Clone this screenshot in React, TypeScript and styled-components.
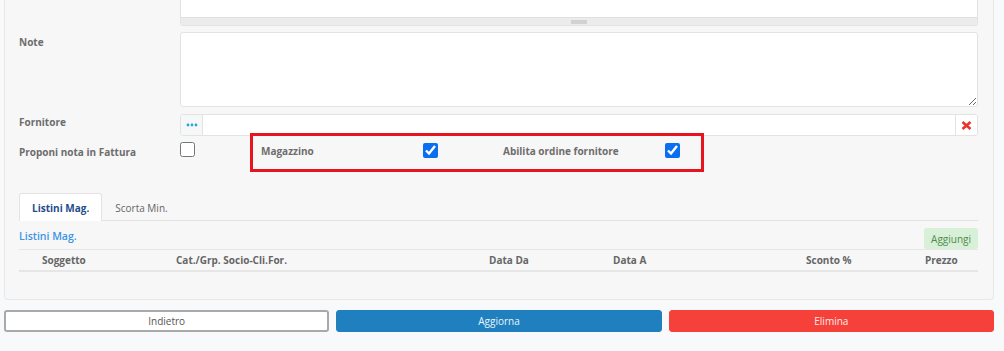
import styled, { createGlobalStyle } from "styled-components";

const GlobalStyle = createGlobalStyle`
  body {
    margin: 0;
    background: #f8f9fb;
    font-family: "Open Sans", "Liberation Sans", sans-serif;
  }
`;

const Page = styled.div`
  width: 1004px;
  height: 351px;
  overflow: hidden;
`;

const Panel = styled.div`
  margin: 0 10px 0 4px;
  padding: 0 15px 27px 14px;
  background: #f7f7f7;
  border: 1px solid #e8e8e8;
  border-top: 0;
  border-radius: 0 0 4px 4px;
`;

const Row = styled.div<{ $mt?: number }>`
  display: grid;
  grid-template-columns: 161px 1fr;
  margin-top: ${(p) => p.$mt ?? 0}px;
`;

const Label = styled.div<{ $top?: number }>`
  font-size: 10px;
  font-weight: 700;
  color: #6d6d6d;
  line-height: 15px;
  align-self: ${(p) => (p.$top !== undefined ? "start" : "center")};
  padding-top: ${(p) => p.$top ?? 0}px;
`;

const TopBox = styled.div`
  height: 26px;
  box-sizing: border-box;
  background: #fff;
  border: 1px solid #e3e3e3;
  border-top: 0;
  border-radius: 0 0 3px 3px;
  display: flex;
  flex-direction: column;
  justify-content: flex-end;
  overflow: hidden;
`;

const ResizeBar = styled.div`
  height: 7px;
  background: #ececec;
  border-top: 1px solid #e0e0e0;
  display: flex;
  justify-content: center;
  align-items: center;
`;

const Handle = styled.span`
  width: 16px;
  height: 4px;
  background: #d2d2d2;
`;

const TextArea = styled.textarea`
  display: block;
  box-sizing: border-box;
  width: 100%;
  height: 75px;
  margin: 0;
  border: 1px solid #e3e3e3;
  border-radius: 3px;
  background: #fff;
  resize: vertical;
  outline: none;
`;

const InputGroup = styled.div`
  display: flex;
  height: 22px;
  box-sizing: border-box;
  border: 1px solid #e3e3e3;
  border-radius: 3px;
  background: #fff;
  overflow: hidden;
`;

const AddonButton = styled.button<{ $side: "left" | "right" }>`
  width: 22px;
  flex: none;
  padding: 0;
  border: 0;
  ${(p) => (p.$side === "left" ? "border-right" : "border-left")}: 1px solid #e3e3e3;
  background: ${(p) => (p.$side === "left" ? "#f6f7f9" : "#fff")};
  display: flex;
  align-items: center;
  justify-content: center;
`;

const TextInput = styled.input`
  flex: 1;
  border: 0;
  outline: none;
  padding: 0 6px;
  background: #fff;
`;

const CheckRow = styled.div`
  display: flex;
  align-items: flex-start;
`;

const Check = styled.input.attrs({ type: "checkbox" })`
  width: 15px;
  height: 15px;
  margin: 0;
  flex: none;
  accent-color: #0b6ef0;
`;

const PlainCheck = styled(Check)`
  margin-top: 9px;
`;

const Highlight = styled.div`
  margin-left: 55px;
  display: flex;
  align-items: center;
  gap: 65px;
  padding: 6px 21px 10px 8px;
  border: 3px solid #e5141e;
`;

const Field = styled.label`
  display: flex;
  align-items: center;
`;

const FieldLabel = styled.span`
  width: 162px;
  font-size: 10px;
  font-weight: 700;
  color: #6d6d6d;
  line-height: 15px;
  padding-top: 2px;
`;

const TabBar = styled.div`
  display: flex;
  height: 27px;
  margin-top: 21px;
  border-bottom: 1px solid #e3e3e3;
`;

const Tab = styled.div<{ $active?: boolean }>`
  padding: 1px 12px 0;
  display: flex;
  align-items: center;
  font-size: 10px;
  font-weight: ${(p) => (p.$active ? 700 : 400)};
  color: ${(p) => (p.$active ? "#1f4d8c" : "#666")};
  background: ${(p) => (p.$active ? "#fff" : "transparent")};
  border: 1px solid ${(p) => (p.$active ? "#e3e3e3" : "transparent")};
  border-bottom: 0;
  border-radius: 3px 3px 0 0;
  margin-bottom: -1px;
`;

const SectionHead = styled.div`
  display: flex;
  justify-content: space-between;
  align-items: center;
  margin-top: 7px;
  height: 21px;
`;

const SectionTitle = styled.span`
  font-size: 10.5px;
  font-weight: 600;
  color: #3b95e6;
  margin-top: -5px;
`;

const AddButton = styled.button`
  height: 21px;
  padding: 0 7px;
  border: 0;
  border-radius: 3px;
  background: #d8efd8;
  color: #4d8d4d;
  font-family: "Open Sans", "Liberation Sans", sans-serif;
  font-size: 10px;
`;

const TableHead = styled.div`
  display: grid;
  grid-template-columns: 157px 313px 124px 193px 119px 1fr;
  height: 23px;
  box-sizing: border-box;
  border-top: 1px solid #e6e6e6;
  border-bottom: 2px solid #e6e6e6;
  align-items: center;
`;

const HeadCell = styled.div<{ $pad?: number }>`
  padding-left: ${(p) => p.$pad ?? 0}px;
  font-size: 10px;
  font-weight: 700;
  color: #666;
`;

const Actions = styled.div`
  display: grid;
  grid-template-columns: repeat(3, 1fr);
  gap: 7px;
  margin: 10px 10px 0 4px;
`;

const ActionButton = styled.button<{ $variant: "default" | "primary" | "danger" }>`
  height: 22px;
  box-sizing: border-box;
  border-radius: 3px;
  font-family: "Open Sans", "Liberation Sans", sans-serif;
  font-size: 10px;
  padding: 0;
  ${(p) =>
    p.$variant === "default"
      ? "background: #fff; border: 2px solid #a9a9a9; color: #555;"
      : p.$variant === "primary"
      ? "background: #1f7fbf; border: 1px solid #1f7fbf; color: #eaf4fb;"
      : "background: #f5413a; border: 1px solid #f5413a; color: #fde9e8;"}
`;

const headers: [string, number][] = [
  ["Soggetto", 23],
  ["Cat./Grp. Socio-Cli.For.", 0],
  ["Data Da", 0],
  ["Data A", 0],
  ["Sconto %", 0],
  ["Prezzo", 0],
];

export default function App() {
  return (
    <Page>
      <GlobalStyle />
      <Panel>
        <Row>
          <div />
          <TopBox>
            <ResizeBar>
              <Handle />
            </ResizeBar>
          </TopBox>
        </Row>
        <Row $mt={6}>
          <Label $top={3}>Note</Label>
          <TextArea />
        </Row>
        <Row $mt={7}>
          <Label $top={1}>Fornitore</Label>
          <InputGroup>
            <AddonButton $side="left">
              <svg width="12" height="4" viewBox="0 0 12 4">
                <circle cx="2" cy="2" r="1.4" fill="#2aa4d8" />
                <circle cx="6" cy="2" r="1.4" fill="#2aa4d8" />
                <circle cx="10" cy="2" r="1.4" fill="#2aa4d8" />
              </svg>
            </AddonButton>
            <TextInput />
            <AddonButton $side="right">
              <svg width="11" height="9" viewBox="0 0 11 9">
                <path d="M1.5 1 L9.5 8 M9.5 1 L1.5 8" stroke="#e8342c" strokeWidth="2.6" />
              </svg>
            </AddonButton>
          </InputGroup>
        </Row>
        <Row $mt={-3}>
          <Label>Proponi nota in Fattura</Label>
          <CheckRow>
            <PlainCheck />
            <Highlight>
              <Field>
                <FieldLabel>Magazzino</FieldLabel>
                <Check defaultChecked />
              </Field>
              <Field>
                <FieldLabel>Abilita ordine fornitore</FieldLabel>
                <Check defaultChecked />
              </Field>
            </Highlight>
          </CheckRow>
        </Row>
        <TabBar>
          <Tab $active>Listini Mag.</Tab>
          <Tab>Scorta Min.</Tab>
        </TabBar>
        <SectionHead>
          <SectionTitle>Listini Mag.</SectionTitle>
          <AddButton>Aggiungi</AddButton>
        </SectionHead>
        <TableHead>
          {headers.map(([h, pad]) => (
            <HeadCell key={h} $pad={pad}>
              {h}
            </HeadCell>
          ))}
        </TableHead>
      </Panel>
      <Actions>
        <ActionButton $variant="default">Indietro</ActionButton>
        <ActionButton $variant="primary">Aggiorna</ActionButton>
        <ActionButton $variant="danger">Elimina</ActionButton>
      </Actions>
    </Page>
  );
}
